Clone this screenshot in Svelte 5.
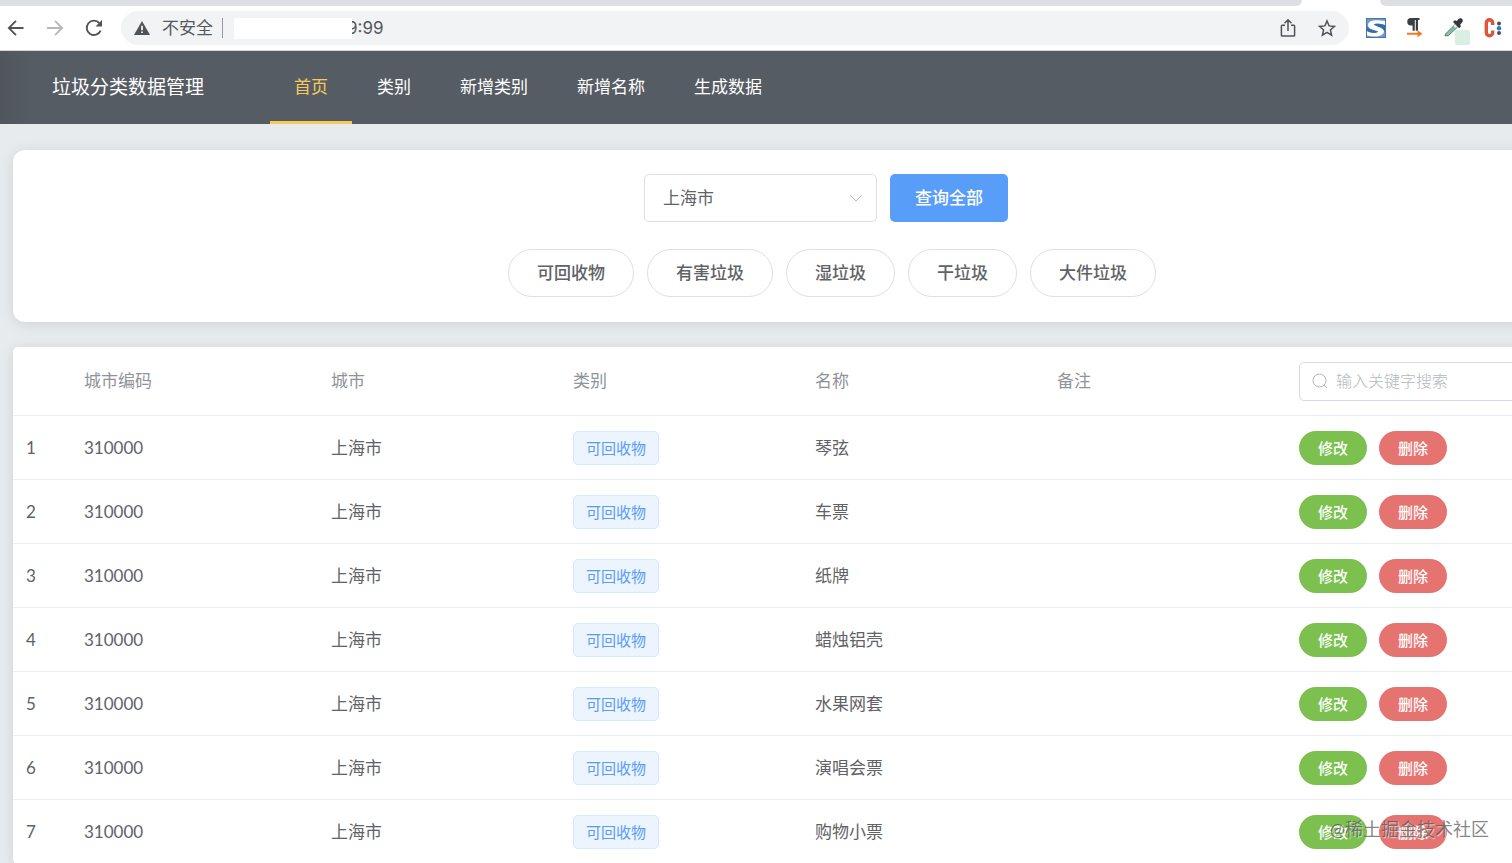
<script>
  const navItems = ["首页", "类别", "新增类别", "新增名称", "生成数据"];
  const categories = ["可回收物", "有害垃圾", "湿垃圾", "干垃圾", "大件垃圾"];
  const cities = ["上海市"];
  const names = ["琴弦", "车票", "纸牌", "蜡烛铝壳", "水果网套", "演唱会票", "购物小票"];

  let activeNav = $state("首页");
  let city = $state("上海市");
  let keyword = $state("");

  let rows = $derived(
    names
      .map((name, i) => ({ id: i + 1, code: "310000", city: "上海市", category: "可回收物", name, note: "" }))
      .filter((row) => row.name.includes(keyword))
  );
</script>

<div class="window">
  <div class="tabstrip">
    <div class="tabs-left"></div>
    <div class="tabs-right"></div>
  </div>

  <div class="toolbar">
    <div class="history">
      <button class="icon" aria-label="后退">
        <svg width="20" height="20" viewBox="0 0 20 20" fill="none" stroke="#505357" stroke-width="1.800">
          <path d="M17.500 10H3M10 2.800 2.800 10l7.200 7.200" />
        </svg>
      </button>
      <button class="icon" aria-label="前进">
        <svg width="20" height="20" viewBox="0 0 20 20" fill="none" stroke="#b5b7b9" stroke-width="1.800">
          <path d="M2 10h15M10 2.800l7.200 7.200-7.200 7.200" />
        </svg>
      </button>
      <button class="icon" aria-label="刷新">
        <svg width="20" height="20" viewBox="0 0 20 20">
          <path d="M16.600 12.600A7.200 7.200 0 1 1 15.300 5" fill="none" stroke="#505357" stroke-width="1.900" />
          <path d="M18 2v6.500h-6.500z" fill="#505357" />
        </svg>
      </button>
    </div>

    <div class="address">
      <svg width="16" height="14" viewBox="0 0 16 14">
        <path d="M8 0l8 14H0z" fill="#505357" />
        <path d="M7.100 4.800h1.800v4.400H7.100zM7.100 10.400h1.800v1.700H7.100z" fill="#f1f3f4" />
      </svg>
      <span class="insecure">不安全</span>
      <span class="divider"></span>
      <span class="url"><span class="mask"></span>9:99</span>
      <span class="address-actions">
        <button class="icon" aria-label="分享">
          <svg width="16" height="20" viewBox="0 0 16 20" fill="none" stroke="#505357" stroke-width="1.500">
            <path d="M5 7.300H2.200a.8.8 0 0 0-.8.8v9.200c0 .5.3.8.8.8h11.600c.5 0 .8-.3.8-.8V8.100a.8.8 0 0 0-.8-.8H11M8 13V2M4.500 5.200 8 1.700l3.500 3.500" />
          </svg>
        </button>
        <button class="icon" aria-label="收藏">
          <svg width="18" height="18" viewBox="0 0 18 18" fill="none" stroke="#505357" stroke-width="1.500">
            <path d="M9 2l2.100 4.900 5.300.5-4 3.500 1.200 5.200L9 13.300l-4.600 2.800 1.200-5.200-4-3.500 5.300-.5z" />
          </svg>
        </button>
      </span>
    </div>

    <div class="extensions">
      <svg width="20" height="20" viewBox="0 0 20 20">
        <rect width="20" height="20" fill="#4378ae" />
        <rect x="1" y="1" width="18" height="18" fill="#6f9bc5" />
        <path d="M1 13c6 3 10 2 11 .5C7 12 2 10.500 2 7c0-4 6-6 17-4v4C13 5 8 5.500 8 6.500c0 1.500 10 2.500 10 7 0 4-7 6.500-17 4z" fill="#fff" />
        <path d="M8 6.500C8 5.500 13 5 19 7v7c-1-5-11-6-11-7.500zM1 8c1 4 9 4.300 11 5.500C11 15 7 16 1 13z" fill="#356ca6" />
      </svg>
      <svg width="18" height="20" viewBox="0 0 18 20">
        <path d="M5 0h8.500v2H12v10.700h-2.200V2H8.800v10.700H6.600V7.500H5a3.750 3.750 0 0 1 0-7.500z" fill="#3b3e42" />
        <path d="M1 14.700h10.500V12.200l5 3.500-5 3.500v-2.500H1z" fill="#ee7d22" />
      </svg>
      <svg class="dropper" width="20" height="28" viewBox="0 0 20 28">
        <rect x="11" y="16" width="15" height="15" rx="2" fill="#d9efe2" />
        <path d="M1.500 20 11 10.500l2.500 2.500L4.500 21.500l-3.500.5z" fill="#78c6a2" stroke="#66776f" />
        <path d="M9.500 12l2.500-2.500 2 2-2.500 2.500z" fill="#e3ece7" />
        <path d="M9 8l1.700-1.700 2 .6 1.900-2c2.500-2 5.400.9 3.700 3.400L16.200 10.500l.7 2-1.700 1.700z" fill="#33363a" />
      </svg>
      <svg width="19" height="20" viewBox="0 0 19 20">
        <path d="M8.700 7V5a3.200 3.200 0 0 0-6.400 0v9.500a3.200 3.200 0 0 0 6.400 0V12.500" fill="none" stroke="#dd5638" stroke-width="3.400" />
        <circle cx="15" cy="5.500" r="2" fill="#4d4f52" />
        <circle cx="15" cy="10.200" r="2.200" fill="#3579c4" />
        <circle cx="15" cy="15" r="2" fill="#4d4f52" />
      </svg>
    </div>
  </div>

  <header>
    <h1>垃圾分类数据管理</h1>
    <nav>
      {#each navItems as item}
        <a href="#{item}" class:active={item === activeNav} onclick={() => (activeNav = item)}>{item}</a>
      {/each}
    </nav>
  </header>

  <main>
    <section class="card filters">
      <div class="query">
        <label class="select">
          <select bind:value={city} aria-label="城市">
            {#each cities as c}
              <option value={c}>{c}</option>
            {/each}
          </select>
          <svg width="14" height="8" viewBox="0 0 14 8" fill="none" stroke="#b4b8c0">
            <path d="M1 1l6 6 6-6" />
          </svg>
        </label>
        <button class="primary">查询全部</button>
      </div>
      <div class="pills">
        {#each categories as category}
          <button class="pill">{category}</button>
        {/each}
      </div>
    </section>

    <section class="card list">
      <table>
        <colgroup>
          <col class="col-index" />
          <col class="col-code" />
          <col class="col-text" />
          <col class="col-text" />
          <col class="col-text" />
          <col class="col-text" />
          <col />
        </colgroup>
        <thead>
          <tr>
            <th></th>
            <th>城市编码</th>
            <th>城市</th>
            <th>类别</th>
            <th>名称</th>
            <th>备注</th>
            <th>
              <label class="search">
                <svg width="16" height="16" viewBox="0 0 16 16" fill="none" stroke="#b4b8c0">
                  <circle cx="7.500" cy="7.500" r="6.500" />
                  <path d="M12 12l3 3" />
                </svg>
                <input type="text" placeholder="输入关键字搜索" aria-label="搜索" bind:value={keyword} />
              </label>
            </th>
          </tr>
        </thead>
        <tbody>
          {#each rows as row (row.id)}
            <tr>
              <td>{row.id}</td>
              <td>{row.code}</td>
              <td>{row.city}</td>
              <td><span class="tag">{row.category}</span></td>
              <td>{row.name}</td>
              <td>{row.note}</td>
              <td>
                <div class="actions">
                  <button class="edit">修改</button>
                  <button class="delete">删除</button>
                </div>
              </td>
            </tr>
          {/each}
        </tbody>
      </table>
    </section>
  </main>

  <div class="watermark">@稀土掘金技术社区</div>
</div>

<style>
  :global(body) { background: #e8ebee; }
  .window {
    position: relative;
    height: 100vh;
    overflow: hidden;
    font-family: Lato, "Noto Sans CJK SC", sans-serif;
    font-size: 17px;
    line-height: 24px;
    color: #606266;
  }
  .window * { box-sizing: border-box; }
  button, select, input { font: inherit; }
  button { cursor: pointer; }
  svg { display: block; flex-shrink: 0; }

  /* browser bar */
  .tabstrip { display: flex; justify-content: space-between; height: 6px; background: #fff; }
  .tabs-left { flex: 1; margin-right: 78px; background: #dedfe2; border-bottom-right-radius: 6px; }
  .tabs-right { width: 132px; background: #dedfe2; border-bottom-left-radius: 6px; }
  .toolbar { display: flex; align-items: center; height: 45px; padding-left: 6px; background: #fff; border-bottom: 1px solid #d3d6d9; }
  .icon { display: flex; padding: 0; border: 0; background: none; }
  .history { display: flex; gap: 19px; width: 115px; }
  .address {
    display: flex;
    flex: 1;
    align-items: center;
    height: 34px;
    padding: 0 13px;
    border-radius: 17px;
    background: #f1f3f4;
    color: #55585c;
    font-family: Inter, "Noto Sans CJK SC", sans-serif;
  }
  .insecure { margin-left: 12px; }
  .divider { width: 1px; height: 20px; margin: 0 11px 0 9px; background: #96999c; }
  .url { display: flex; align-items: center; }
  .mask { width: 118px; height: 21px; margin-right: -5px; background: #fff; z-index: 1; }
  .address-actions { display: flex; align-items: center; gap: 22px; margin-left: auto; }
  .extensions { display: flex; align-items: center; gap: 20px; padding: 0 9px 0 17px; }
  .dropper { overflow: visible; }

  /* app header */
  header {
    display: flex;
    height: 73px;
    padding-left: 52px;
    background: linear-gradient(to right, #51565d, #565c63 32px);
    color: #fff;
  }
  h1 { width: 218px; margin: 0; font-size: 19px; font-weight: 400; line-height: 72px; }
  nav { display: flex; gap: 1px; }
  nav a {
    padding: 0 24px;
    border-bottom: 3px solid transparent;
    color: #fff;
    line-height: 72px;
    text-decoration: none;
  }
  nav a.active { border-color: #f5cb5c; color: #f5cb5c; }

  /* the page is wider than the window, the table runs out on the right */
  main { margin-right: -152px; padding: 26px 13px; }
  .card { background: #fff; box-shadow: 0 2px 14px rgba(0, 0, 0, 0.1); }

  .filters { padding: 24px 0 25px; border-radius: 12px; }
  .query { display: flex; justify-content: center; gap: 13px; padding-right: 12px; }
  .select { display: flex; position: relative; align-items: center; width: 233px; }
  .select select {
    width: 100%;
    height: 48px;
    padding: 0 18px;
    border: 1px solid #dcdfe6;
    border-radius: 5px;
    appearance: none;
    background: #fff;
    color: #606266;
  }
  .select svg { position: absolute; right: 14px; pointer-events: none; }
  .primary { height: 48px; padding: 0 25px; border: 0; border-radius: 5px; background: #589df8; color: #fff; font-weight: 500; }
  .pills { display: flex; justify-content: center; gap: 13px; margin-top: 27px; }
  .pill {
    height: 48px;
    padding: 0 28px;
    border: 1px solid #dcdfe6;
    border-radius: 24px;
    background: #fff;
    color: #606266;
    font-weight: 500;
  }

  .list { margin-top: 25px; border-radius: 5px; }
  table { width: 100%; table-layout: fixed; border-collapse: separate; border-spacing: 0; }
  .col-index { width: 58px; }
  .col-code { width: 247px; }
  .col-text { width: 242px; }
  th, td { height: 64px; padding: 0 13px; border-bottom: 1px solid #ebeef2; text-align: left; }
  th { height: 69px; color: #909399; font-weight: 400; }
  .search {
    display: flex;
    align-items: center;
    gap: 8px;
    height: 39px;
    padding: 0 12px;
    border: 1px solid #d7dae1;
    border-radius: 5px;
  }
  .search input { flex: 1; border: 0; outline: 0; padding: 0; color: #606266; font-size: 16px; }
  .search input::placeholder { color: #b4b8c0; font-weight: 300; }
  .tag {
    display: inline-block;
    padding: 0 12px;
    border: 1px solid #d8e8fd;
    border-radius: 5px;
    background: #ecf4fe;
    color: #589df8;
    font-size: 15px;
    line-height: 32px;
    vertical-align: middle;
  }
  .actions { display: flex; gap: 12px; }
  .actions button {
    height: 34px;
    padding: 0 19px;
    border: 0;
    border-radius: 17px;
    color: #fff;
    font-size: 15px;
    font-weight: 500;
  }
  .actions .edit { background: #7cc04f; }
  .actions .delete { background: #e5736f; }

  .watermark {
    position: absolute;
    right: 23px;
    bottom: 22px;
    color: rgba(80, 80, 80, 0.7);
    font-size: 18px;
    text-shadow: 1px 1px 1px rgba(255, 255, 255, 0.6);
    pointer-events: none;
  }
</style>
